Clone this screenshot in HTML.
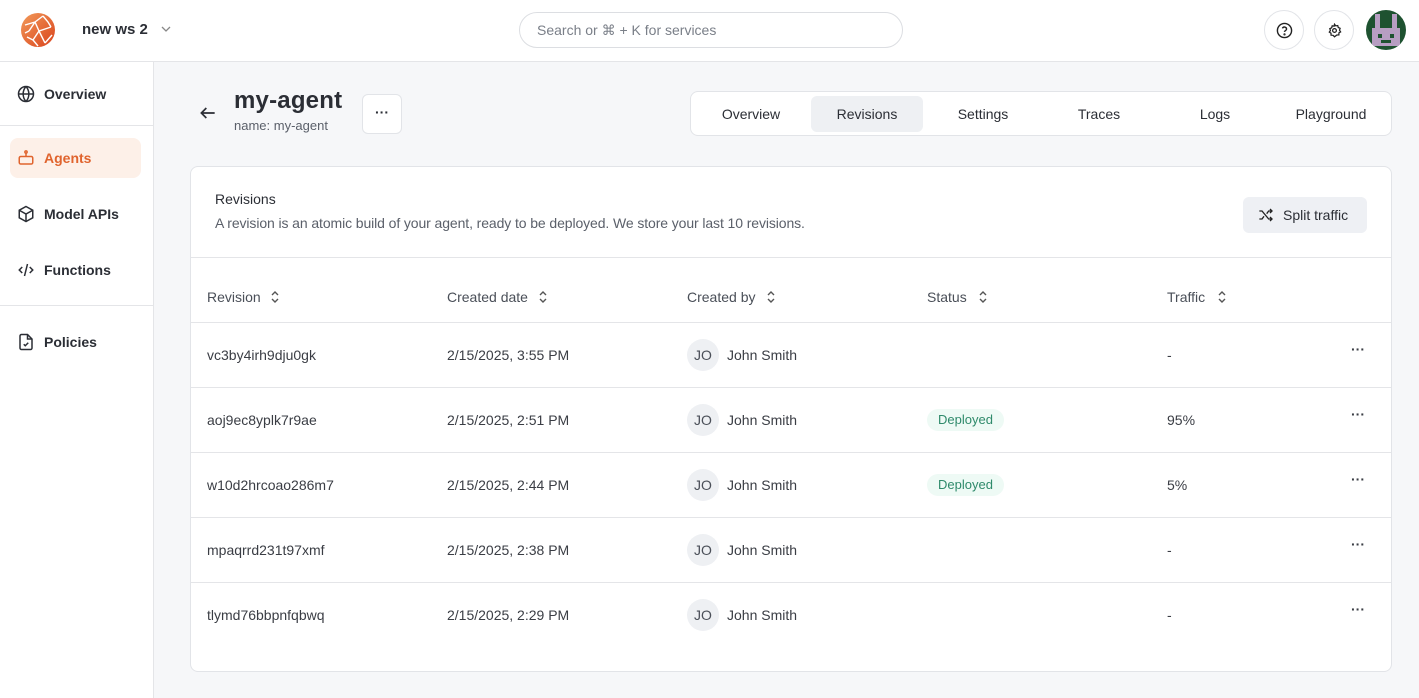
<!DOCTYPE html>
<html><head><meta charset="utf-8"><style>
*{box-sizing:border-box;margin:0;padding:0}
body{width:1419px;height:698px;overflow:hidden;font-family:"Liberation Sans",sans-serif;color:#2b2e35;background:#f6f7f9;position:relative;font-size:14px}
.abs{position:absolute}
.top{left:0;top:0;width:1419px;height:62px;background:#fff;border-bottom:1px solid #e4e5e8}
.side{left:0;top:62px;width:154px;height:636px;background:#fff;border-right:1px solid #e4e5e8}
.nav{position:absolute;left:10px;width:131px;height:40px;display:flex;align-items:center;padding-left:7px;font-weight:bold;font-size:14px;color:#2b2e35;border-radius:8px}
.nav svg{margin-right:9px}
.card{left:190px;top:166px;width:1202px;height:506px;background:#fff;border:1px solid #e2e4e8;border-radius:8px;overflow:hidden}
.row{position:absolute;left:0;width:1202px;height:65px;border-top:1px solid #e4e5e8}
.row span{position:absolute;top:0;line-height:64px;font-size:14px;color:#3a3d44}
.th span{color:#4a4f58;line-height:78px}
.row .av{top:16px;width:32px;height:32px;border-radius:50%;background:#eef0f3;text-align:center;line-height:32px;font-size:14px;color:#4a4f58}
.row .dep{top:21px;height:22px;padding:0 11px;border-radius:11px;background:#eefaf5;color:#2f8a6b;font-size:13px;line-height:22px}
.row .dots{left:1160px;font-weight:bold;line-height:52px}
.tab{position:absolute;top:4px;height:36px;width:112px;line-height:36px;text-align:center;font-size:14px;color:#2b2e35;border-radius:6px}
</style></head><body>
<div class="abs top">
 <svg class="abs" style="left:21px;top:13px" width="34" height="34" viewBox="0 0 34 34"><defs><linearGradient id="g" x1="0" y1="0" x2="1" y2="1"><stop offset="0" stop-color="#f29a5a"/><stop offset="1" stop-color="#d9431c"/></linearGradient></defs><circle cx="17" cy="17" r="17" fill="url(#g)"/><path d="M4 12 L14 9 L22 3 M14 9 L18 18 L30 14 M18 18 L12 27 L6 24 M18 18 L24 30 M22 3 L27 9 L30 14 M8 18 L14 9 M12 27 L17 33 M24 30 L31 22 M4 20 L8 18" stroke="#fff" stroke-width="1.4" fill="none"/></svg>
 <div class="abs" style="left:82px;top:21px;font-size:15px;font-weight:bold;color:#2b2e35">new ws 2</div>
 <svg class="abs" style="left:160px;top:24px" width="12" height="10" viewBox="0 0 12 10"><path d="M2 3l4 4 4-4" stroke="#888" stroke-width="1.3" fill="none"/></svg>
 <div class="abs" style="left:519px;top:12px;width:384px;height:36px;border:1px solid #dcdee2;border-radius:18px;padding-left:17px;line-height:34px;color:#7a7f88;font-size:14px">Search or ⌘ + K for services</div>
 <div class="abs" style="left:1264px;top:10px;width:40px;height:40px;border:1px solid #e2e4e8;border-radius:50%"><svg style="margin:11px" width="17" height="17" viewBox="0 0 24 24" fill="none" stroke="#222" stroke-width="2"><circle cx="12" cy="12" r="10"/><path d="M9.1 9a3 3 0 0 1 5.8 1c0 2-3 2.5-3 4"/><circle cx="12" cy="17.5" r=".6" fill="#222"/></svg></div>
 <div class="abs" style="left:1314px;top:10px;width:40px;height:40px;border:1px solid #e2e4e8;border-radius:50%"><svg style="margin:12px" width="15" height="15" viewBox="0 0 24 24" fill="none" stroke="#222" stroke-width="2"><path d="M12 2l2 2.5 3.2-.4.8 3.1 3 1.3-1 3 1.8 2.7-2.7 1.6-.1 3.2-3.2.2L12 22l-2.3-2.3-3.2-.2-.1-3.2L3.7 14.6 5.5 12l-1-3 3-1.3.8-3.1 3.2.4z"/><circle cx="12" cy="12" r="3"/></svg></div>
 <svg class="abs" style="left:1366px;top:10px" width="40" height="40" viewBox="0 0 40 40"><clipPath id="c"><circle cx="20" cy="20" r="20"/></clipPath><g clip-path="url(#c)"><rect width="40" height="40" fill="#1e5230"/><g fill="#b79ec2"><rect x="9" y="4" width="5" height="14"/><rect x="26" y="4" width="5" height="14"/><rect x="6" y="18" width="28" height="18"/></g><g fill="#1e5230"><rect x="12" y="24" width="4" height="4"/><rect x="24" y="24" width="4" height="4"/><rect x="15" y="30" width="10" height="3"/></g></g></svg>
</div>
<div class="abs side">
 <div class="nav" style="top:12px"><svg width="18" height="18" viewBox="0 0 24 24" fill="none" stroke="#2b2e35" stroke-width="2"><circle cx="12" cy="12" r="10"/><path d="M2 12h20M12 2a15 15 0 0 1 0 20M12 2a15 15 0 0 0 0 20"/></svg>Overview</div>
 <div class="abs" style="left:0;top:63px;width:153px;border-top:1px solid #e4e5e8"></div>
 <div class="nav" style="top:76px;background:#fdf0e8;color:#e0642e"><svg width="18" height="18" viewBox="0 0 24 24" fill="none" stroke="#e0642e" stroke-width="2"><rect x="3" y="10" width="18" height="10" rx="2"/><path d="M12 10V5"/><circle cx="12" cy="4" r="1.5"/><path d="M8 15h.01M16 15h.01"/></svg>Agents</div>
 <div class="nav" style="top:132px"><svg width="18" height="18" viewBox="0 0 24 24" fill="none" stroke="#2b2e35" stroke-width="2"><path d="M12 2l9 5v10l-9 5-9-5V7z"/><path d="M3 7l9 5 9-5M12 12v10"/></svg>Model APIs</div>
 <div class="nav" style="top:188px"><svg width="18" height="18" viewBox="0 0 24 24" fill="none" stroke="#2b2e35" stroke-width="2"><path d="M7 8l-4 4 4 4M17 8l4 4-4 4M14 4l-4 16"/></svg>Functions</div>
 <div class="abs" style="left:0;top:243px;width:153px;border-top:1px solid #e4e5e8"></div>
 <div class="nav" style="top:260px"><svg width="18" height="18" viewBox="0 0 24 24" fill="none" stroke="#2b2e35" stroke-width="2"><path d="M14 2H6a2 2 0 0 0-2 2v16a2 2 0 0 0 2 2h12a2 2 0 0 0 2-2V8z"/><path d="M14 2v6h6M9 15l2 2 4-4"/></svg>Policies</div>
</div>
<svg class="abs" style="left:198px;top:103px" width="20" height="20" viewBox="0 0 24 24" fill="none" stroke="#2b2e35" stroke-width="2"><path d="M20 12H4M10 6l-6 6 6 6"/></svg>
<div class="abs" style="left:234px;top:87px;font-size:24px;font-weight:bold;color:#2b2e35;letter-spacing:0.2px">my-agent</div>
<div class="abs" style="left:234px;top:118px;font-size:13px;color:#5b606a">name: my-agent</div>
<div class="abs" style="left:362px;top:94px;width:40px;height:40px;border:1px solid #e2e4e8;border-radius:6px;background:#fff;text-align:center;line-height:34px;font-weight:bold;font-size:14px">···</div>
<div class="abs" style="left:690px;top:91px;width:702px;height:45px;border:1px solid #e2e4e8;border-radius:8px;background:#fff">
 <div class="tab" style="left:4px">Overview</div>
 <div class="tab" style="left:120px;background:#eef0f3">Revisions</div>
 <div class="tab" style="left:236px">Settings</div>
 <div class="tab" style="left:352px">Traces</div>
 <div class="tab" style="left:468px">Logs</div>
 <div class="tab" style="left:584px">Playground</div>
</div>
<div class="abs card">
 <div class="abs" style="left:24px;top:24px;font-size:14px;color:#2b2e35">Revisions</div>
 <div class="abs" style="left:24px;top:48px;font-size:14px;color:#5b606a;letter-spacing:-0.1px">A revision is an atomic build of your agent, ready to be deployed. We store your last 10 revisions.</div>
 <div class="abs" style="left:1052px;top:30px;width:124px;height:36px;background:#eef0f4;border-radius:6px;line-height:36px;font-size:14px;color:#2b2e35;padding-left:40px"><svg class="abs" style="left:15px;top:11px" width="16" height="14" viewBox="0 0 24 20" fill="none" stroke="#222" stroke-width="2"><path d="M2 4h4l10 12h5M2 16h4l3-4M13 8l3-4h5M18 1l3 3-3 3M18 13l3 3-3 3"/></svg>Split traffic</div>
 <div class="row th" style="top:90px"><span style="left:16px">Revision</span><span style="left:256px">Created date</span><span style="left:496px">Created by</span><span style="left:736px">Status</span><span style="left:976px">Traffic</span></div>
 <div class="row" style="top:155px"><span style="left:16px">vc3by4irh9dju0gk</span><span style="left:256px">2/15/2025, 3:55 PM</span><span class="av" style="left:496px">JO</span><span style="left:536px">John Smith</span><span style="left:976px">-</span><span class="dots">···</span></div>
 <div class="row" style="top:220px"><span style="left:16px">aoj9ec8yplk7r9ae</span><span style="left:256px">2/15/2025, 2:51 PM</span><span class="av" style="left:496px">JO</span><span style="left:536px">John Smith</span><span class="dep" style="left:736px">Deployed</span><span style="left:976px">95%</span><span class="dots">···</span></div>
 <div class="row" style="top:285px"><span style="left:16px">w10d2hrcoao286m7</span><span style="left:256px">2/15/2025, 2:44 PM</span><span class="av" style="left:496px">JO</span><span style="left:536px">John Smith</span><span class="dep" style="left:736px">Deployed</span><span style="left:976px">5%</span><span class="dots">···</span></div>
 <div class="row" style="top:350px"><span style="left:16px">mpaqrrd231t97xmf</span><span style="left:256px">2/15/2025, 2:38 PM</span><span class="av" style="left:496px">JO</span><span style="left:536px">John Smith</span><span style="left:976px">-</span><span class="dots">···</span></div>
 <div class="row" style="top:415px"><span style="left:16px">tlymd76bbpnfqbwq</span><span style="left:256px">2/15/2025, 2:29 PM</span><span class="av" style="left:496px">JO</span><span style="left:536px">John Smith</span><span style="left:976px">-</span><span class="dots">···</span></div>
</div>
<svg class="abs" style="left:270px;top:290px" width="10" height="14" viewBox="0 0 10 14" fill="none" stroke="#555" stroke-width="1.4"><path d="M2 5l3-3 3 3M2 9l3 3 3-3"/></svg>
<svg class="abs" style="left:538px;top:290px" width="10" height="14" viewBox="0 0 10 14" fill="none" stroke="#555" stroke-width="1.4"><path d="M2 5l3-3 3 3M2 9l3 3 3-3"/></svg>
<svg class="abs" style="left:766px;top:290px" width="10" height="14" viewBox="0 0 10 14" fill="none" stroke="#555" stroke-width="1.4"><path d="M2 5l3-3 3 3M2 9l3 3 3-3"/></svg>
<svg class="abs" style="left:978px;top:290px" width="10" height="14" viewBox="0 0 10 14" fill="none" stroke="#555" stroke-width="1.4"><path d="M2 5l3-3 3 3M2 9l3 3 3-3"/></svg>
<svg class="abs" style="left:1217px;top:290px" width="10" height="14" viewBox="0 0 10 14" fill="none" stroke="#555" stroke-width="1.4"><path d="M2 5l3-3 3 3M2 9l3 3 3-3"/></svg>
</body></html>
